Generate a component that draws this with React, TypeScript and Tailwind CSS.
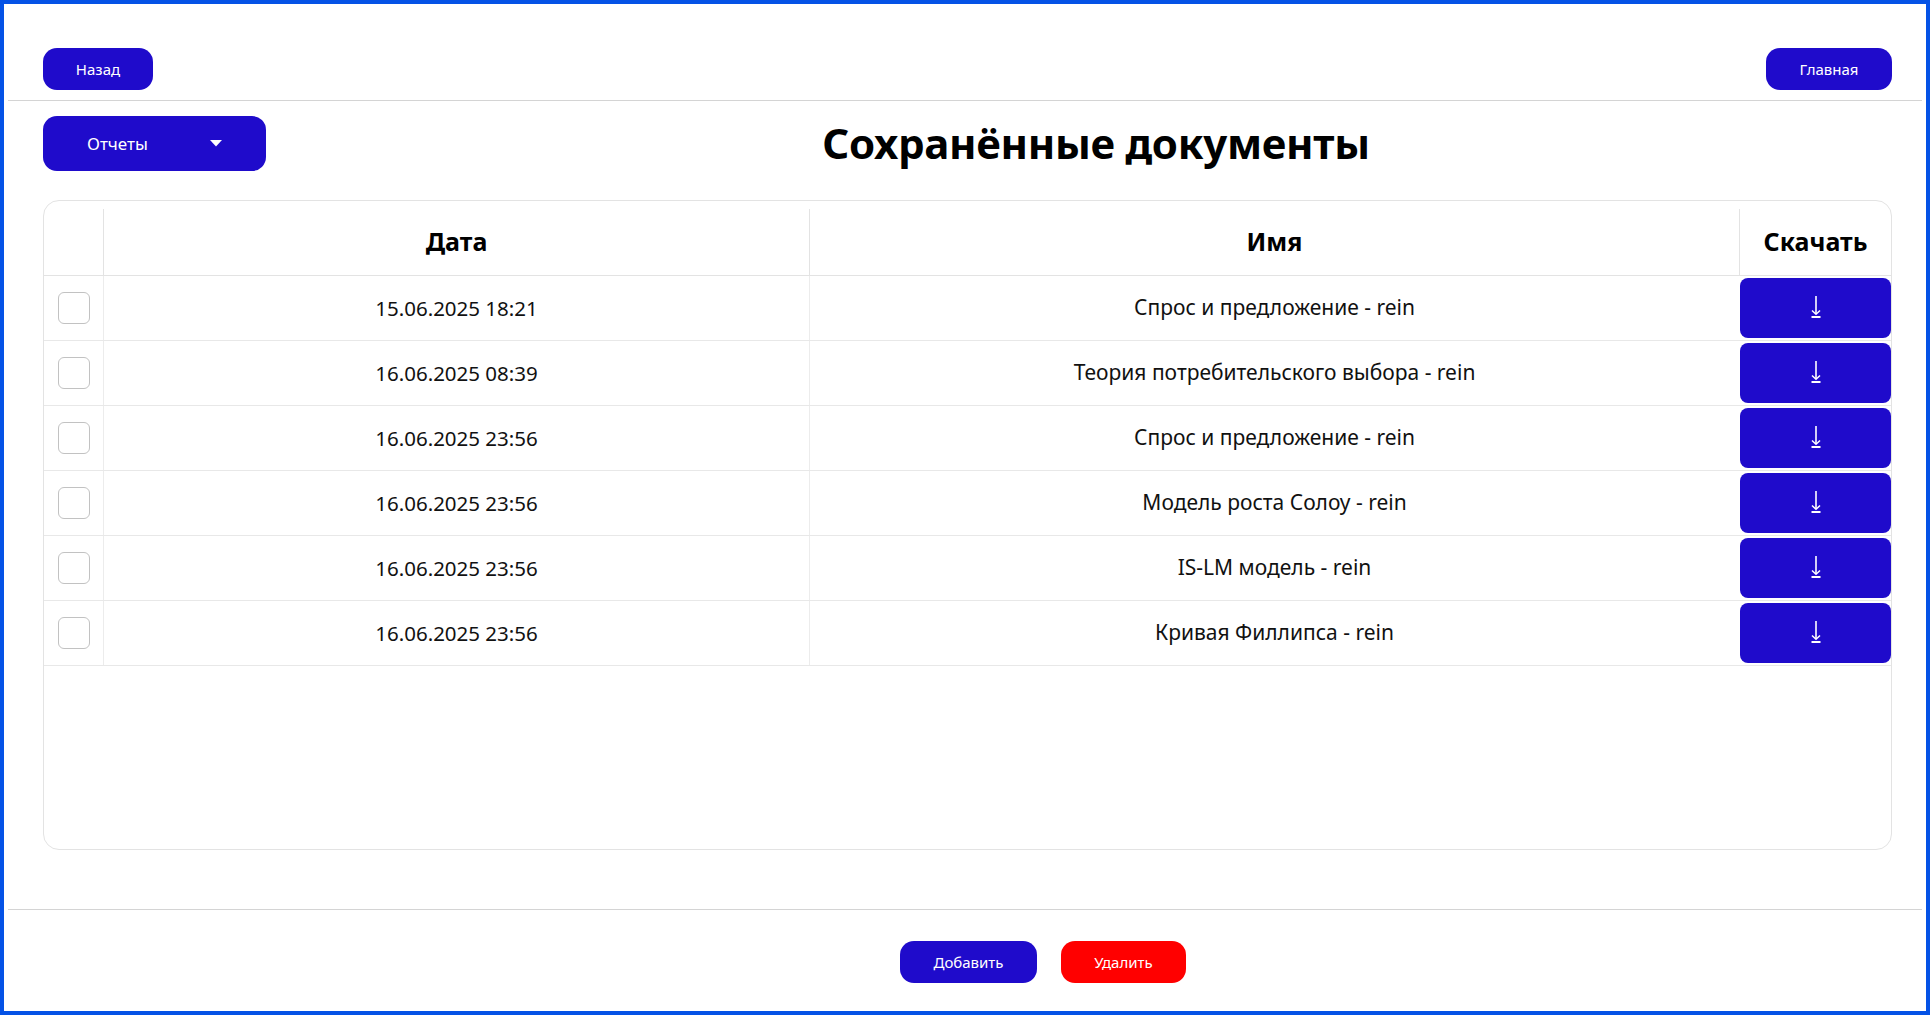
import { useState } from 'react'

type Doc = { id: number; date: string; name: string }

const docs: Doc[] = [
  { id: 1, date: '15.06.2025 18:21', name: 'Спрос и предложение - rein' },
  { id: 2, date: '16.06.2025 08:39', name: 'Теория потребительского выбора - rein' },
  { id: 3, date: '16.06.2025 23:56', name: 'Спрос и предложение - rein' },
  { id: 4, date: '16.06.2025 23:56', name: 'Модель роста Солоу - rein' },
  { id: 5, date: '16.06.2025 23:56', name: 'IS-LM модель - rein' },
  { id: 6, date: '16.06.2025 23:56', name: 'Кривая Филлипса - rein' },
]

export default function App() {
  const [checked, setChecked] = useState<number[]>([])

  function toggle(id: number) {
    setChecked(prev => (prev.includes(id) ? prev.filter(x => x !== id) : [...prev, id]))
  }

  return (
    <div className="h-[1015px] w-full border-4 border-[#0452e6] bg-white font-['Noto_Sans','Open_Sans',sans-serif] text-black flex flex-col">
      <header className="pt-[44px] pl-[39px] pr-[34px] flex items-center justify-between">
        <PillButton className="w-[110px]">Назад</PillButton>
        <PillButton className="w-[126px]">Главная</PillButton>
      </header>
      <div className="mx-1 mt-[10px] h-px bg-[#d4d4d4]" />

      <div className="pl-[39px] mt-[15px] flex items-center">
        <button className="h-[55px] w-[223px] rounded-[14px] bg-[#1f0bcb] text-white text-[17px] flex items-center pl-[44px]">
          <span>Отчеты</span>
          <svg width="12" height="7" viewBox="0 0 12 7" className="ml-[62px]">
            <path d="M0 0 H12 L6 6.5 Z" fill="white" />
          </svg>
        </button>
        <h1 className="flex-1 text-center text-[42px] font-bold tracking-[-0.3px] leading-none -mt-[2px]">
          Сохранённые документы
        </h1>
      </div>

      <div className="mt-[29px] ml-[39px] mr-[34px] h-[650px] rounded-2xl border border-[#e3e3e3] pt-2 overflow-hidden">
        <div className="grid grid-cols-[59px_706px_930px_152px] border-b border-[#e3e3e3]">
          <div className="h-[66px]" />
          <HeadCell>Дата</HeadCell>
          <HeadCell>Имя</HeadCell>
          <HeadCell>Скачать</HeadCell>
        </div>
        {docs.map(d => (
          <div key={d.id} className="grid grid-cols-[59px_706px_930px_152px] h-[65px] border-b border-[#e8e8e8]">
            <div className="flex items-center justify-center pl-px">
              <button
                onClick={() => toggle(d.id)}
                className={`h-8 w-8 rounded-md border-[1.5px] ${checked.includes(d.id) ? 'border-[#1f0bcb] bg-[#1f0bcb]' : 'border-[#c2c2c2] bg-white'}`}
              />
            </div>
            <div className="border-l border-[#ececec] flex items-center justify-center text-[20.5px] text-[#111]">
              {d.date}
            </div>
            <div className="border-l border-[#ececec] flex items-center justify-center text-[21px] text-[#111]">
              {d.name}
            </div>
            <div className="pl-px pt-[2px] pb-[2px]">
              <button className="h-[60px] w-full rounded-lg bg-[#1f0bcb] flex items-center justify-center">
                <DownloadIcon />
              </button>
            </div>
          </div>
        ))}
      </div>

      <div className="mx-1 mt-[59px] h-px bg-[#d4d4d4]" />
      <div className="mt-[31px] flex justify-center gap-6 pl-[156px]">
        <PillButton className="w-[137px]">Добавить</PillButton>
        <button className="h-[42px] w-[125px] rounded-[14px] bg-[#ff0000] text-white text-[15px]">Удалить</button>
      </div>
    </div>
  )
}

function PillButton({ children, className }: { children: string; className?: string }) {
  return (
    <button className={`h-[42px] rounded-[14px] bg-[#1f0bcb] text-white text-[15px] ${className ?? ''}`}>
      {children}
    </button>
  )
}

function HeadCell({ children }: { children: string }) {
  return (
    <div className="h-[66px] border-l border-[#e3e3e3] flex items-center justify-center text-[25px] font-bold">
      {children}
    </div>
  )
}

function DownloadIcon() {
  return (
    <svg width="10" height="22" viewBox="0 0 10 22" fill="none" className="mt-[-2px]">
      <path d="M5 0 V18" stroke="white" strokeWidth="1.6" />
      <path d="M1 14.5 L5 18.3 L9 14.5" stroke="white" strokeWidth="1.5" />
      <rect x="0.5" y="20" width="9" height="2" fill="white" />
    </svg>
  )
}
